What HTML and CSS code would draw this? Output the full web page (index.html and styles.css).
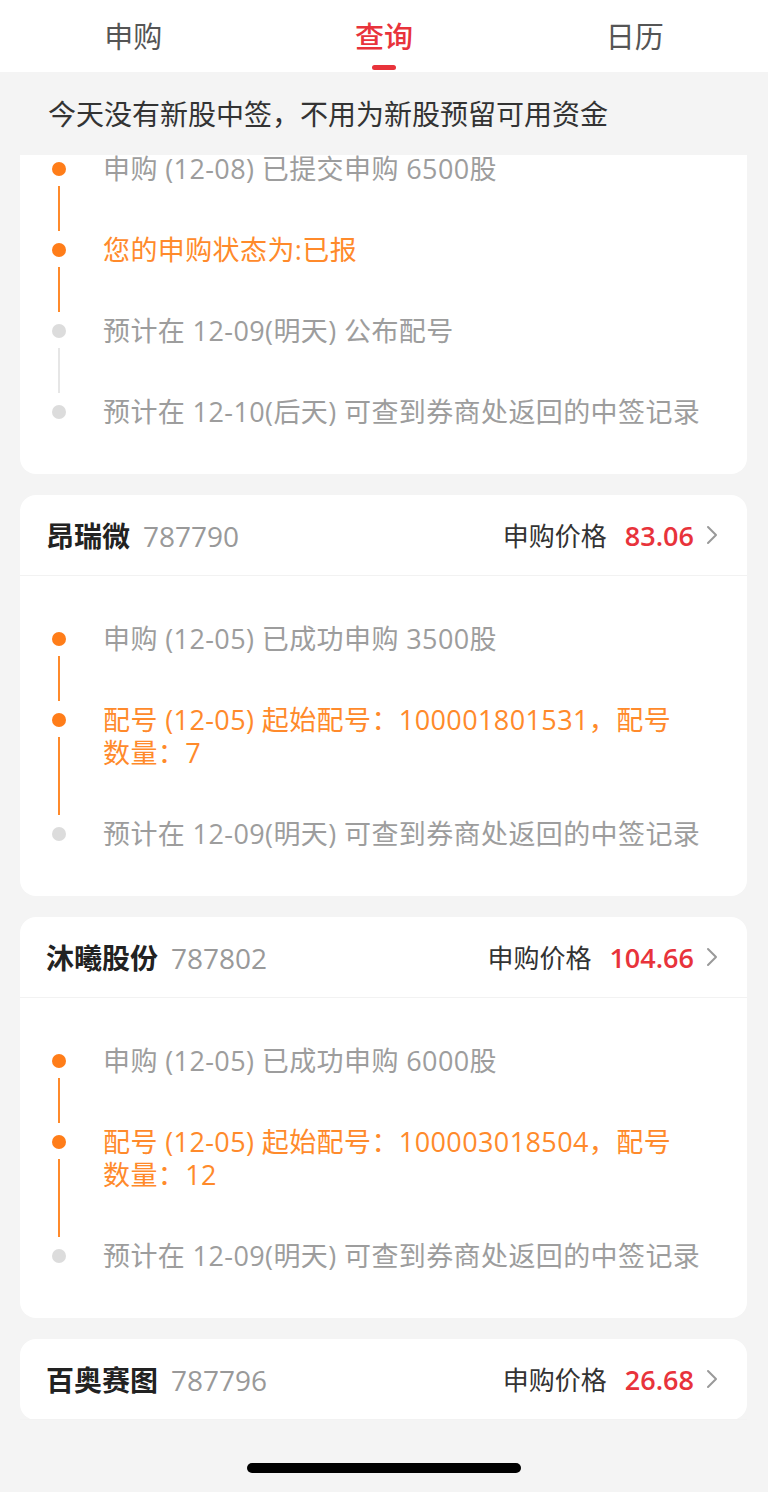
FILE: index.html
```html
<!DOCTYPE html>
<html lang="zh-CN">
<head>
    <meta charset="UTF-8">
    <meta name="viewport" content="width=device-width, initial-scale=1.0">
    <title>新股查询</title>
    <link rel="stylesheet" href="styles.css">
</head>
<body>
    <nav class="tabs">
        <div class="tab">申购</div>
        <div class="tab active">查询</div>
        <div class="tab">日历</div>
    </nav>

    <p class="notice">今天没有新股中签，不用为新股预留可用资金</p>

    <div class="feed">
        <section class="card cut">
            <div class="steps">
                <div class="step done">
                    <div class="rail"><span class="dot"></span><span class="line"></span></div>
                    <div class="text muted">申购 (12-08) 已提交申购 6500股</div>
                </div>
                <div class="step done">
                    <div class="rail"><span class="dot"></span><span class="line"></span></div>
                    <div class="text hot">您的申购状态为:已报</div>
                </div>
                <div class="step">
                    <div class="rail"><span class="dot"></span><span class="line"></span></div>
                    <div class="text muted">预计在 12-09(明天) 公布配号</div>
                </div>
                <div class="step">
                    <div class="rail"><span class="dot"></span></div>
                    <div class="text muted">预计在 12-10(后天) 可查到券商处返回的中签记录</div>
                </div>
            </div>
        </section>

        <section class="card">
            <header class="card-head">
                <div class="stock"><span class="name">昂瑞微</span><span class="code">787790</span></div>
                <div class="price">
                    <span class="label">申购价格</span>
                    <span class="value">83.06</span>
                    <svg class="chev" width="12" height="22" viewBox="0 0 12 22"><polyline points="2,3 10,11 2,19" fill="none" stroke="#999" stroke-width="2" stroke-linecap="round" stroke-linejoin="round"/></svg>
                </div>
            </header>
            <div class="steps">
                <div class="step done">
                    <div class="rail"><span class="dot"></span><span class="line"></span></div>
                    <div class="text muted">申购 (12-05) 已成功申购 3500股</div>
                </div>
                <div class="step done">
                    <div class="rail"><span class="dot"></span><span class="line"></span></div>
                    <div class="text hot">配号 (12-05) 起始配号：100001801531，配号<br>数量：7</div>
                </div>
                <div class="step">
                    <div class="rail"><span class="dot"></span></div>
                    <div class="text muted">预计在 12-09(明天) 可查到券商处返回的中签记录</div>
                </div>
            </div>
        </section>

        <section class="card">
            <header class="card-head">
                <div class="stock"><span class="name">沐曦股份</span><span class="code">787802</span></div>
                <div class="price">
                    <span class="label">申购价格</span>
                    <span class="value">104.66</span>
                    <svg class="chev" width="12" height="22" viewBox="0 0 12 22"><polyline points="2,3 10,11 2,19" fill="none" stroke="#999" stroke-width="2" stroke-linecap="round" stroke-linejoin="round"/></svg>
                </div>
            </header>
            <div class="steps">
                <div class="step done">
                    <div class="rail"><span class="dot"></span><span class="line"></span></div>
                    <div class="text muted">申购 (12-05) 已成功申购 6000股</div>
                </div>
                <div class="step done">
                    <div class="rail"><span class="dot"></span><span class="line"></span></div>
                    <div class="text hot">配号 (12-05) 起始配号：100003018504，配号<br>数量：12</div>
                </div>
                <div class="step">
                    <div class="rail"><span class="dot"></span></div>
                    <div class="text muted">预计在 12-09(明天) 可查到券商处返回的中签记录</div>
                </div>
            </div>
        </section>

        <section class="card">
            <header class="card-head">
                <div class="stock"><span class="name">百奥赛图</span><span class="code">787796</span></div>
                <div class="price">
                    <span class="label">申购价格</span>
                    <span class="value">26.68</span>
                    <svg class="chev" width="12" height="22" viewBox="0 0 12 22"><polyline points="2,3 10,11 2,19" fill="none" stroke="#999" stroke-width="2" stroke-linecap="round" stroke-linejoin="round"/></svg>
                </div>
            </header>
        </section>
    </div>

    <div class="home">
        <span class="home-bar"></span>
    </div>
</body>
</html>
```

FILE: styles.css
```css
body {
    margin: 0;
    background-color: #f4f4f4;
    font-family: "Open Sans", "Noto Sans CJK SC", sans-serif;
    color: #333;
}
.tabs {
    display: grid;
    grid-template-columns: repeat(3, 1fr);
    height: 72px;
    padding: 0 8px;
    background: #fff;
}
.tab {
    position: relative;
    text-align: center;
    font-size: 29px;
    line-height: 74px;
    color: #555;
}
.tab.active {
    color: #e8333b;
    font-weight: 500;
}
.tab.active::after {
    content: "";
    position: absolute;
    left: 50%;
    bottom: 4px;
    width: 24px;
    height: 5px;
    margin-left: -12px;
    border-radius: 3px;
    background: #e8333b;
}
.notice {
    margin: 0;
    height: 83px;
    padding-left: 48px;
    font-size: 28px;
    line-height: 84px;
    color: #333;
}
.feed {
    display: flex;
    flex-direction: column;
    gap: 21px;
    height: 1265px;
    padding: 0 21px 0 20px;
    overflow: hidden;
}
.card {
    flex: none;
    background: #fff;
    border-radius: 16px;
}
.card.cut {
    border-radius: 0 0 16px 16px;
}
.card-head {
    display: flex;
    align-items: center;
    justify-content: space-between;
    height: 80px;
    padding: 0 29px 0 26px;
    border-bottom: 1px solid #f2f2f2;
}
.stock .name {
    font-size: 28px;
    font-weight: bold;
    color: #222;
}
.stock .code {
    margin-left: 13px;
    font-size: 28px;
    color: #999;
}
.price {
    display: flex;
    align-items: center;
}
.price .label {
    font-size: 26px;
    color: #333;
}
.price .value {
    margin-left: 18px;
    font-size: 27px;
    font-weight: 600;
    color: #e8333b;
}
.chev {
    margin-left: 12px;
}
.steps {
    padding: 46px 20px 46px 32px;
}
.cut .steps {
    padding-top: 0;
    margin-top: -3px;
}
.step {
    display: grid;
    grid-template-columns: 14px 1fr;
    column-gap: 37px;
    padding-bottom: 48px;
}
.step:last-child {
    padding-bottom: 0;
}
.rail {
    display: flex;
    flex-direction: column;
    align-items: center;
}
.dot {
    width: 14px;
    height: 14px;
    margin-top: 10px;
    border-radius: 50%;
    background: #dcdcdc;
}
.line {
    flex: 1;
    width: 2px;
    margin: 10px 0 -46px;
    background: #e6e6e6;
}
.step.done .dot {
    background: #ff7d19;
}
.step.done .line {
    background: #ff8a2b;
}
.text {
    font-size: 27px;
    line-height: 33px;
    letter-spacing: 0.4px;
}
.text.muted {
    color: #9d9d9d;
}
.text.hot {
    color: #ff8a2b;
}
.home {
    display: flex;
    justify-content: center;
    padding-top: 43px;
}
.home-bar {
    width: 274px;
    height: 10px;
    border-radius: 5px;
    background: #000;
}
```
